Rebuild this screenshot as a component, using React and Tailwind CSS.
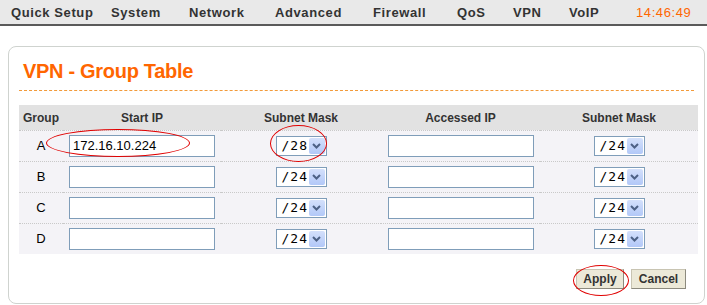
import React from 'react'

const navItems = [
  { label: 'Quick Setup', w: 'w-[100px]' },
  { label: 'System', w: 'w-[78px]' },
  { label: 'Network', w: 'w-[86px]' },
  { label: 'Advanced', w: 'w-[98px]' },
  { label: 'Firewall', w: 'w-[84px]' },
  { label: 'QoS', w: 'w-[56px]' },
  { label: 'VPN', w: 'w-[56px]' },
  { label: 'VoIP', w: 'w-[68px]' },
]

const rows = [
  { group: 'A', start: '172.16.10.224', mask1: '/28', mask2: '/24' },
  { group: 'B', start: '', mask1: '/24', mask2: '/24' },
  { group: 'C', start: '', mask1: '/24', mask2: '/24' },
  { group: 'D', start: '', mask1: '/24', mask2: '/24' },
]

function IpInput({ value }) {
  return (
    <div className="w-[146px] h-[22px] border border-[#7f9db9] bg-white flex items-center px-[3px] text-[13px] text-black">
      {value}
    </div>
  )
}

function MaskSelect({ value }) {
  return (
    <div className="w-[51px] h-[20px] border border-[#7f9db9] bg-white flex items-center">
      <span className="flex-1 pl-[5px] text-[13px] text-black font-['DejaVu_Sans_Mono',monospace] tracking-[1px]">{value}</span>
      <span className="w-[16px] h-[16px] mr-[1px] rounded-[2px] bg-gradient-to-b from-[#d4e0fb] to-[#b2c8f8] flex items-center justify-center">
        <svg width="9" height="6" viewBox="0 0 9 6">
          <path d="M1 1 L4.5 4.5 L8 1" stroke="#4d6185" strokeWidth="2" fill="none" />
        </svg>
      </span>
    </div>
  )
}

export default function App() {
  return (
    <div className="relative w-[707px] h-[305px] bg-white font-['Liberation_Sans',Arial,sans-serif] text-[#333] overflow-hidden">
      {/* top navigation */}
      <div className="h-[26px] bg-[#e9e9e9] border-b-2 border-[#5a5a5a] flex items-center pl-[11px] pt-[2px]">
        {navItems.map(n => (
          <span key={n.label} className={`${n.w} shrink-0 text-[13px] font-bold tracking-[0.6px] text-[#333]`}>{n.label}</span>
        ))}
        <span className="ml-[-1px] text-[13px] text-[#ff6600] tracking-[0.6px]">14:46:49</span>
      </div>

      {/* panel */}
      <div className="mt-[20px] ml-[8px] mr-[2px] h-[258px] border border-[#cfd3cf] rounded-[8px] px-[10px] pt-[13px]">
        <h2 className="pl-[4px] text-[20px] font-bold text-[#ff6600] leading-[22px] tracking-[-0.3px]">VPN - Group Table</h2>
        <div className="mt-[8px] border-t border-dashed border-[#f29a3a]" />

        <div className="mt-[14px] grid grid-cols-[44px_158px_160px_159px_158px]">
          <div className="h-[25px] bg-[#e2e2e2] flex items-center pl-[4px] text-[12px] font-bold">Group</div>
          <div className="h-[25px] bg-[#e2e2e2] flex items-center justify-center text-[12px] font-bold">Start IP</div>
          <div className="h-[25px] bg-[#e2e2e2] flex items-center justify-center text-[12px] font-bold">Subnet Mask</div>
          <div className="h-[25px] bg-[#e2e2e2] flex items-center justify-center text-[12px] font-bold">Accessed IP</div>
          <div className="h-[25px] bg-[#e2e2e2] flex items-center justify-center text-[12px] font-bold">Subnet Mask</div>

          {rows.map(r => (
            <React.Fragment key={r.group}>
              <div className="h-[31px] bg-[#f4f3f7] border-t border-dotted border-[#c9c9c9] flex items-center justify-center text-[13px] text-black">{r.group}</div>
              <div className="h-[31px] bg-[#f4f3f7] border-t border-dotted border-[#c9c9c9] flex items-center justify-center">
                <IpInput value={r.start} />
              </div>
              <div className="h-[31px] bg-[#f4f3f7] border-t border-dotted border-[#c9c9c9] flex items-center justify-center">
                <MaskSelect value={r.mask1} />
              </div>
              <div className="h-[31px] bg-[#f4f3f7] border-t border-dotted border-[#c9c9c9] flex items-center justify-center">
                <IpInput value="" />
              </div>
              <div className="h-[31px] bg-[#f4f3f7] border-t border-dotted border-[#c9c9c9] flex items-center justify-center">
                <MaskSelect value={r.mask2} />
              </div>
            </React.Fragment>
          ))}
        </div>

        <div className="mt-[15px] flex justify-end gap-[7px] pr-[8px]">
          <button className="w-[48px] h-[20px] bg-[#ece9d8] border border-[#c8c4b2] border-r-[#8c8a7e] border-b-[#8c8a7e] text-[12px] font-bold text-[#333]">Apply</button>
          <button className="w-[55px] h-[20px] bg-[#ece9d8] border border-[#c8c4b2] border-r-[#8c8a7e] border-b-[#8c8a7e] text-[12px] font-bold text-[#333]">Cancel</button>
        </div>
      </div>

      {/* red annotation ellipses */}
      <div className="absolute left-[46px] top-[129px] w-[144px] h-[28px] rounded-[50%] border border-[#e00000]" />
      <div className="absolute left-[270px] top-[125px] w-[57px] h-[37px] rounded-[50%] border border-[#e00000]" />
      <div className="absolute left-[573px] top-[265px] w-[56px] h-[31px] rounded-[50%] border border-[#e00000]" />
    </div>
  )
}
